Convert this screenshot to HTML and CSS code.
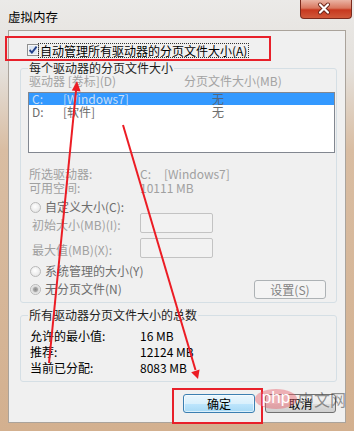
FILE: index.html
```html
<!DOCTYPE html>
<html lang="zh-CN">
<head>
  <meta charset="UTF-8" />
  <title>虚拟内存</title>
  <link rel="stylesheet" href="styles.css">
</head>
<body>

<div class="window">
  <div class="titlebar">
    <span class="title">虚拟内存</span>
    <div class="close">
      <svg width="52" height="19" viewBox="0 0 52 19">
        <path d="M20 5.5 L28 13.5 M28 5.5 L20 13.5" stroke="#6a2418" stroke-width="4" stroke-linecap="round"/>
        <path d="M20 5.5 L28 13.5 M28 5.5 L20 13.5" stroke="#fff" stroke-width="2.2" stroke-linecap="round"/>
      </svg>
    </div>
  </div>

  <div class="client">
    <div class="auto">
      <span class="check">
        <svg width="12" height="12" viewBox="0 0 12 12">
          <rect x="0.5" y="0.5" width="11" height="11" fill="#f6f6f6" stroke="#8e8f8f"/>
          <rect x="2" y="2" width="8" height="8" fill="#dfe8f4"/>
          <path d="M2.6 6 L4.9 8.6 L9.6 2.6" fill="none" stroke="#23408a" stroke-width="1.9"/>
        </svg>
      </span>
      <span class="focus">自动管理所有驱动器的分页文件大小(A)</span>
    </div>

    <fieldset class="group">
      <legend>每个驱动器的分页文件大小</legend>
      <div class="list-head"><span>驱动器 [卷标](D)</span><span>分页文件大小(MB)</span></div>
      <div class="list">
        <div class="row sel"><span>C:</span><span>[Windows7]</span><span>无</span></div>
        <div class="row"><span>D:</span><span>[软件]</span><span>无</span></div>
      </div>

      <div class="info">
        <span>所选驱动器:</span><span><span class="drv">C:</span>[Windows7]</span>
        <span>可用空间:</span><span>10111 MB</span>
      </div>

      <div class="opt first"><span class="radio"></span>自定义大小(C):</div>
      <div class="field"><span class="field-label">初始大小(MB)(I):</span><span class="textbox"></span></div>
      <div class="field second"><span class="field-label">最大值(MB)(X):</span><span class="textbox"></span></div>
      <div class="opt sys"><span class="radio"></span>系统管理的大小(Y)</div>
      <div class="last-row">
        <div class="opt"><span class="radio on"></span>无分页文件(N)</div>
        <div class="btn set">设置(S)</div>
      </div>
    </fieldset>

    <fieldset class="group total">
      <legend>所有驱动器分页文件大小的总数</legend>
      <div class="totals">
        <span>允许的最小值:</span><span>16 MB</span>
        <span>推荐:</span><span>12124 MB</span>
        <span>当前已分配:</span><span>8083 MB</span>
      </div>
    </fieldset>

    <div class="buttons">
      <div class="btn default">确定</div>
      <div class="btn">取消</div>
    </div>
  </div>

  <svg class="marks" width="354" height="431" viewBox="0 0 354 431">
    <rect x="6" y="37" width="264" height="23" fill="none" stroke="#e8202a" stroke-width="2"/>
    <rect x="173" y="389" width="89" height="34" fill="none" stroke="#e8202a" stroke-width="2"/>
    <line x1="49" y1="363" x2="76.1" y2="90" stroke="#ec1c24" stroke-width="2"/>
    <polygon points="77,81 80.6,91.4 71.8,90.6" fill="#ec1c24"/>
    <line x1="123" y1="125" x2="195.5" y2="370" stroke="#ec1c24" stroke-width="2"/>
    <polygon points="198,379 199.6,369.6 191.2,372.2" fill="#ec1c24"/>
  </svg>

  <div class="watermark">
    <span class="wm-php">php</span><span class="wm-cn">中文网</span>
  </div>
</div>

</body>
</html>
```

FILE: styles.css
```css
body {
  margin: 0;
  font-family: "Noto Sans CJK SC", "Liberation Sans", sans-serif;
  font-size: 12px;
  color: #000;
  background: #fff;
}
.window {
  position: relative;
  width: 354px;
  height: 431px;
  box-sizing: border-box;
  padding: 0 8px 8px 8px;
  display: flex;
  flex-direction: column;
  background: linear-gradient(180deg, #ebeae8 0, #e4e0db 70px, #d9bda2 150px, #d3b08f 431px);
}
.titlebar {
  height: 30px;
  display: flex;
  align-items: flex-start;
  flex-shrink: 0;
}
.title {
  margin-top: 9px;
  font-size: 12.5px;
  line-height: 16px;
  color: #000;
}
.close {
  margin-left: auto;
  margin-right: -6px;
  width: 52px;
  height: 19px;
  box-sizing: border-box;
  border: 1px solid #7b2a1d;
  border-top: none;
  border-radius: 0 0 4px 4px;
  background: linear-gradient(180deg, #eab3a4 0, #d9775f 45%, #c7381f 55%, #d0593a 100%);
}
.close svg { display: block; margin: -1px 0 0 -1px; }

.client {
  flex: 1;
  background: #f0f0f0;
  border: 1px solid #aaa39b;
}

.auto {
  display: flex;
  align-items: center;
  height: 14px;
  margin: 12px 0 0 18px;
}
.check { width: 12px; height: 12px; }
.check svg { display: block; }
.focus {
  line-height: 13px;
  padding: 0 1px;
  outline: 1px dotted #333;
}

.group {
  margin: 4px 0 0 11px;
  width: 317px;
  box-sizing: border-box;
  border: 1px solid #d5dfe5;
  border-radius: 3px;
  padding: 0 0 3px 0;
}
.group legend {
  margin-left: 7px;
  padding: 0 1px;
  line-height: 14px;
  height: 14px;
  color: #1e1e1e;
}
.list-head {
  display: grid;
  grid-template-columns: 155px auto;
  height: 12px;
  line-height: 12px;
  padding-left: 8px;
  color: #a3a3a3;
}
.list {
  margin: 5px 0 0 7px;
  width: 307px;
  height: 61px;
  box-sizing: border-box;
  border: 1px solid #828790;
  background: #fff;
}
.row {
  display: grid;
  grid-template-columns: 31px 149px auto;
  padding-left: 3px;
  height: 13px;
  line-height: 13px;
  color: #6d6d6d;
}
.row.sel {
  height: 12px;
  line-height: 12px;
  background: #3399ff;
  color: #c9def6;
}
.row.sel span:last-child { color: #55677d; }

.info {
  display: grid;
  grid-template-columns: 111px auto;
  margin-top: 14px;
  padding-left: 8px;
  line-height: 14px;
  color: #a0a0a0;
}
.drv { display: inline-block; width: 24px; }

.opt {
  display: flex;
  align-items: center;
  gap: 4px;
  height: 12px;
  line-height: 12px;
  padding-left: 9px;
  color: #6d6d6d;
}
.opt.first { margin-top: 6px; }
.opt.sys { margin-top: 7px; }
.radio {
  width: 11px;
  height: 11px;
  box-sizing: border-box;
  border-radius: 50%;
  border: 1px solid #b9b9b9;
  background: radial-gradient(circle at 45% 40%, #ffffff 0, #ececec 60%, #dcdcdc 100%);
}
.radio.on {
  background: radial-gradient(circle, #8a8a8a 0, #a6a6a6 2px, #d8d8d8 3px, #f4f4f4 5px);
}

.field {
  display: flex;
  align-items: center;
  height: 20px;
  padding-left: 11px;
  color: #a0a0a0;
}
.field.second { margin-top: 5px; }
.field-label {
  width: 108px;
  padding-top: 3px;
  line-height: 14px;
}
.textbox {
  width: 73px;
  height: 20px;
  box-sizing: border-box;
  border: 1px solid #c3c3c3;
  border-radius: 2px;
  background: #f2f2f2;
}
.last-row {
  display: flex;
  align-items: center;
  height: 20px;
  margin-top: 2px;
}

.btn {
  height: 19px;
  box-sizing: border-box;
  border: 1px solid #707070;
  border-radius: 3px;
  background: linear-gradient(180deg, #f2f2f2 0, #ebebeb 50%, #dddddd 51%, #cfcfcf 100%);
  text-align: center;
  line-height: 17px;
  width: 71px;
}
.btn.set {
  margin-left: auto;
  margin-right: 10px;
  width: 72px;
  border-color: #adb2b5;
  background: #f4f4f4;
  color: #838383;
}
.btn.default {
  width: 72px;
  border-color: #3c7fb1;
  background: linear-gradient(180deg, #eaf6fd 0, #d9f0fc 50%, #bee6fd 51%, #a7d9f5 100%);
  box-shadow: inset 0 0 0 1px rgba(255,255,255,0.6);
}

.group.total { margin-top: 5px; padding-bottom: 5px; }
.totals {
  display: grid;
  grid-template-columns: 110px auto;
  margin-top: 6px;
  padding-left: 9px;
  line-height: 16px;
  color: #000;
}

.buttons {
  display: flex;
  justify-content: flex-end;
  gap: 10px;
  margin-top: 12px;
  padding-right: 9px;
}

.marks {
  position: absolute;
  left: 0;
  top: 0;
  pointer-events: none;
}
.watermark {
  position: absolute;
  left: 255px;
  top: 389px;
  display: flex;
  align-items: center;
  pointer-events: none;
}
.wm-php {
  width: 42px;
  height: 20px;
  border-radius: 50%;
  background: rgba(232, 96, 106, 0.45);
  color: #fff;
  font-family: "Liberation Sans", sans-serif;
  font-size: 17px;
  line-height: 18px;
  text-align: center;
}
.wm-cn {
  margin-left: 1px;
  font-size: 16px;
  line-height: 18px;
  color: rgba(60, 60, 60, 0.55);
}
```
